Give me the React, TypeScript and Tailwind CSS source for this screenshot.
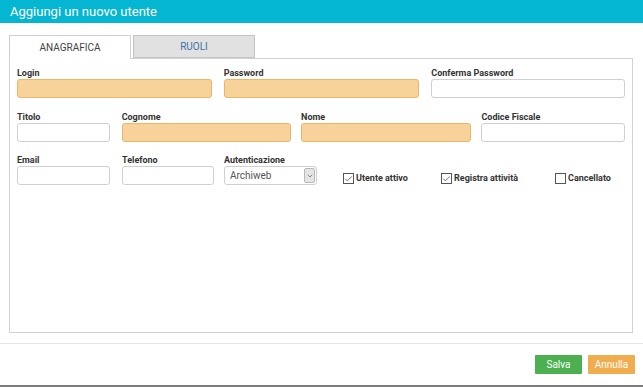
import { Check, ChevronDown } from 'lucide-react';

const Field = ({ label, width, filled }: { label: string; width: string; filled?: boolean }) => (
  <div className={`flex flex-col ${width}`}>
    <label className="text-[9px] font-bold text-[#333] leading-[11px] h-[11px]">{label}</label>
    <div
      className={`h-[19px] rounded-[3px] border ${
        filled ? 'bg-[#f7d39b] border-[#e9b867]' : 'bg-white border-[#d0d0d0]'
      }`}
    />
  </div>
);

const CheckItem = ({ label, checked, width }: { label: string; checked?: boolean; width: string }) => (
  <div className={`flex items-center gap-[2px] ${width}`}>
    <span className="w-[11px] h-[11px] border border-[#555] bg-white flex items-center justify-center">
      {checked && <Check size={10} strokeWidth={2} className="text-[#444]" />}
    </span>
    <span className="text-[9px] font-bold text-[#333]">{label}</span>
  </div>
);

const App = () => {
  return (
    <div className="w-[643px] h-[387px] bg-white flex flex-col font-['Roboto','Liberation_Sans',sans-serif]">
      <div className="h-[23px] bg-[#05b6d2] text-white text-[13px] pl-[10px] flex items-center">
        Aggiungi un nuovo utente
      </div>

      <div className="px-[9px] pt-[12px] w-[642px]">
        <div className="flex h-[24px] relative z-10 gap-[2px]">
          <div className="w-[122px] border border-[#d0d0d0] border-b-0 bg-white flex items-center justify-center text-[10px] text-[#444]">
            ANAGRAFICA
          </div>
          <div className="w-[122px] h-[23px] border border-[#c4c4c4] bg-[#e1e1e1] flex items-center justify-center text-[10px] text-[#3f70a6]">
            RUOLI
          </div>
        </div>
        <div className="-mt-[1px] h-[275px] border border-[#d2d2d2] px-[7px] pt-[9px]">
          <div className="flex gap-[12px]">
            <Field label="Login" width="w-[196px]" filled />
            <Field label="Password" width="w-[197px]" filled />
            <Field label="Conferma Password" width="w-[195px]" />
          </div>
          <div className="flex mt-[14px]">
            <Field label="Titolo" width="w-[93px]" />
            <div className="w-[12px]" />
            <Field label="Cognome" width="w-[170px]" filled />
            <div className="w-[10px]" />
            <Field label="Nome" width="w-[171px]" filled />
            <div className="w-[10px]" />
            <Field label="Codice Fiscale" width="w-[144px]" />
          </div>
          <div className="flex mt-[13px] items-end">
            <Field label="Email" width="w-[93px]" />
            <div className="w-[12px]" />
            <Field label="Telefono" width="w-[92px]" />
            <div className="w-[10px]" />
            <div className="flex flex-col w-[93px]">
              <label className="text-[9px] font-bold text-[#333] leading-[11px] h-[11px]">Autenticazione</label>
              <div className="h-[19px] rounded-[3px] border border-[#d0d0d0] bg-white flex items-center pl-[5px] pr-[1px]">
                <span className="flex-1 text-[10px] text-[#555]">Archiweb</span>
                <span className="w-[11px] h-[15px] bg-[#e4e4e4] border border-[#b8b8b8] rounded-[2px] flex items-center justify-center">
                  <ChevronDown size={8} strokeWidth={2} className="text-[#555]" />
                </span>
              </div>
            </div>
            <div className="w-[26px]" />
            <div className="flex h-[19px] items-center mb-[-3px]">
              <CheckItem label="Utente attivo" checked width="w-[98px]" />
              <CheckItem label="Registra attività" checked width="w-[114px]" />
              <CheckItem label="Cancellato" width="w-[60px]" />
            </div>
          </div>
        </div>
      </div>

      <div className="mt-[10px] border-t border-[#e6e6e6]" />
      <div className="flex justify-end gap-[6px] pr-[8px] mt-[11px]">
        <button className="w-[47px] h-[19px] bg-[#4cb050] text-white text-[10px] rounded-[1px]">Salva</button>
        <button className="w-[47px] h-[19px] bg-[#f0ad4e] text-white text-[10px] rounded-[1px]">Annulla</button>
      </div>
      <div className="mt-auto h-[2px] bg-[#7a7a7a]" />
    </div>
  );
};

export default App;
